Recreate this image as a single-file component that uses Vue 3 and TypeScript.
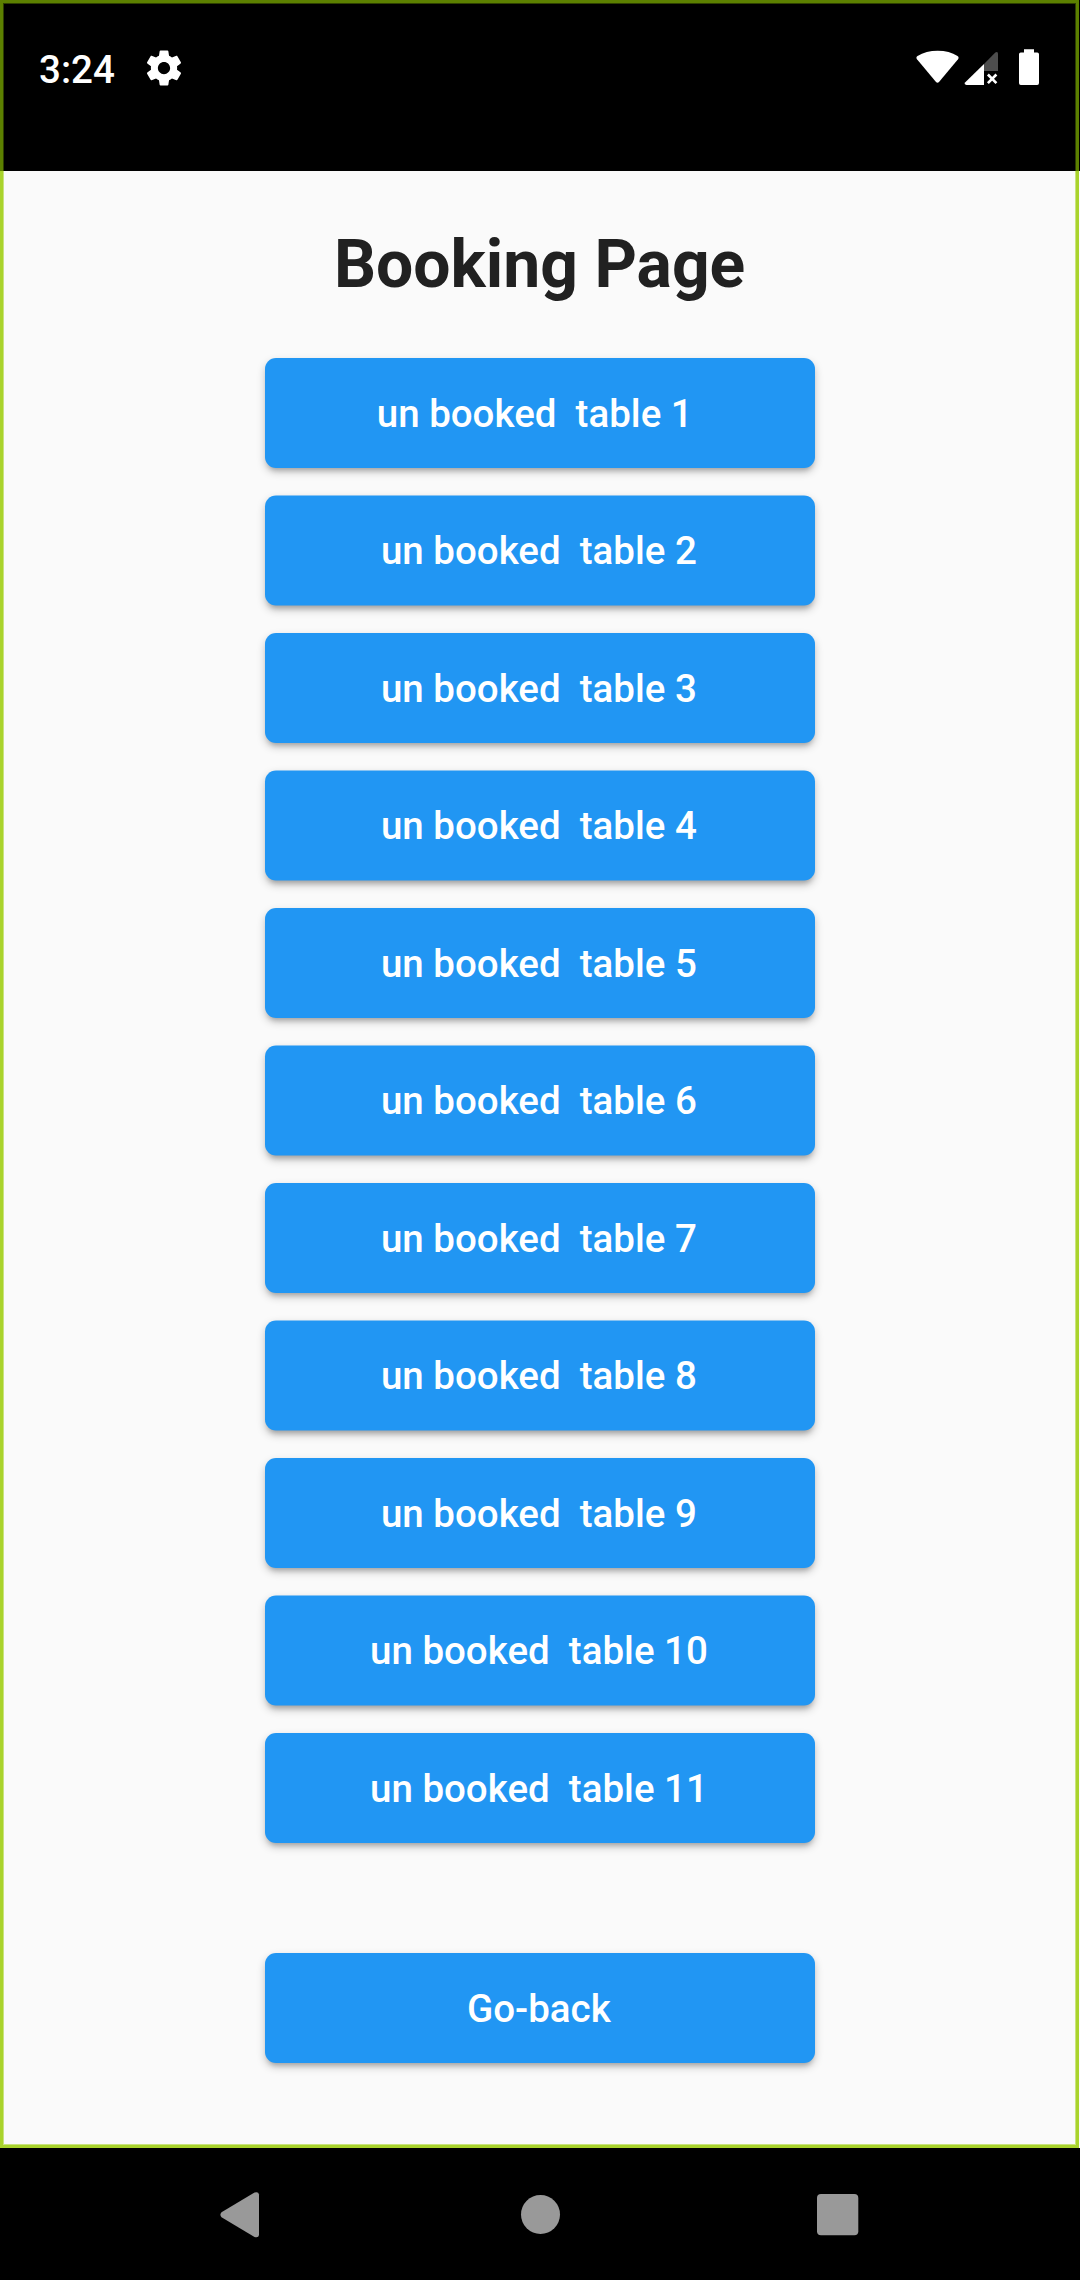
<script setup lang="ts">
const tables: string[] = [
  'un booked  table 1 ',
  ...Array.from({ length: 10 }, (_, i) => `un booked  table ${i + 2}`),
]
</script>

<template>
  <div class="screen">
    <header class="status">
      <div class="left">
        <span class="clock">3:24</span>
        <svg class="gear" viewBox="0 0 24 24">
          <path fill="#fff" d="M19.43 12.98c.04-.32.07-.64.07-.98s-.03-.66-.07-.98l2.11-1.65c.19-.15.24-.42.12-.64l-2-3.46c-.12-.22-.39-.3-.61-.22l-2.49 1c-.52-.4-1.08-.73-1.69-.98l-.38-2.65C14.46 2.18 14.25 2 14 2h-4c-.25 0-.46.18-.49.42l-.38 2.65c-.61.25-1.17.59-1.69.98l-2.49-1c-.23-.09-.49 0-.61.22l-2 3.46c-.13.22-.07.49.12.64l2.11 1.65c-.04.32-.07.65-.07.98s.03.66.07.98l-2.11 1.65c-.19.15-.24.42-.12.64l2 3.46c.12.22.39.3.61.22l2.49-1c.52.4 1.08.73 1.69.98l.38 2.65c.03.24.24.42.49.42h4c.25 0 .46-.18.49-.42l.38-2.65c.61-.25 1.17-.59 1.69-.98l2.49 1c.23.09.49 0 .61-.22l2-3.46c.12-.22.07-.49-.12-.64l-2.11-1.65zM12 15.500c-1.930 0-3.500-1.570-3.500-3.500s1.570-3.500 3.500-3.500 3.500 1.570 3.500 3.500-1.570 3.500-3.500 3.500z" />
        </svg>
      </div>
      <svg class="signals" viewBox="0 0 124 38" width="124" height="38">
        <path fill="#fff" d="M1 10.200Q-.4 8.400 1.500 7Q10 1.700 21.700 1.700T41.500 7Q43.400 8.400 42 10.200L23 33Q21.500 34.600 20 33Z" />
        <path fill="#fff" d="M68 15V36H50.500Q47.500 35.500 49.300 33.300Z" />
        <path fill="#4d4d4d" d="M68 15L79.300 3.500Q81.500 2.300 82 4.500V22H68Z" />
        <path stroke="#fff" stroke-width="2.600" d="M71.900 25.500L80.400 34.200M80.400 25.500L71.900 34.200" />
        <path fill="#fff" d="M108 .3h10v3.200h3.200q1.800 0 1.800 1.800v28.700q0 2-1.800 2h-16.400q-1.800 0-1.800-2v-28.700q0-1.800 1.800-1.800h3.200z" />
      </svg>
    </header>

    <main class="page">
      <h1 class="title">Booking Page</h1>
      <div class="tables">
        <button v-for="label in tables" :key="label" class="btn">{{ label }}</button>
      </div>
      <button class="btn back">Go-back</button>
    </main>

    <nav class="nav">
      <svg viewBox="0 0 1080 132" width="1080" height="132">
        <g fill="#999">
          <path d="M221.500 64.300L254.500 44.600Q258.500 43.300 259 46.500V87Q258.500 90.200 254.500 88.900L221.500 69.200Q219.300 66.700 221.500 64.300Z" />
          <circle cx="540.500" cy="66.500" r="19.500" />
          <rect x="817" y="46" width="41.300" height="41.300" rx="4" />
        </g>
      </svg>
    </nav>

    <div class="frame dark"></div>
    <div class="frame light"></div>
  </div>
</template>

<style>
body {
  margin: 0;
}
</style>

<style scoped>
.screen {
  position: relative;
  display: flex;
  flex-direction: column;
  width: 1080px;
  height: 2280px;
  overflow: hidden;
  background: #fafafa;
  font-family: Roboto, 'Liberation Sans', sans-serif;
}
.status {
  box-sizing: border-box;
  display: flex;
  justify-content: space-between;
  align-items: flex-start;
  height: 171px;
  padding: 49px 40px 0 39px;
  background: #000;
}
.left {
  display: flex;
  align-items: flex-start;
}
.clock {
  margin-top: -2px;
  color: #fff;
  font-size: 38.5px;
  font-weight: 500;
  line-height: 45px;
}
.gear {
  width: 42px;
  height: 42px;
  margin: -2.5px 0 0 28.5px;
}
.page {
  display: flex;
  flex: 1;
  flex-direction: column;
  align-items: center;
}
.title {
  margin: 55px 0 0;
  padding-right: 0.8px;
  color: #212121;
  font-size: 66px;
  font-weight: 700;
  line-height: 77px;
}
.tables {
  display: flex;
  flex-direction: column;
  gap: 27.5px;
  margin-top: 55px;
}
.btn {
  position: relative;
  isolation: isolate;
  box-sizing: border-box;
  width: 550px;
  height: 110px;
  padding: 0 2.2px 0 0;
  border: 0;
  background: none;
  color: #fff;
  font-family: inherit;
  font-size: 38.5px;
  font-weight: 500;
  line-height: 45px;
  text-align: center;
  white-space: pre;
}
.tables .btn:first-child {
  padding-right: 1px;
}
.btn::before {
  position: absolute;
  z-index: -1;
  inset: 0;
  border-radius: 11px;
  background: #2196f3;
  box-shadow:
    0 5px 5px -3px rgba(0, 0, 0, 0.2),
    0 4px 8px rgba(0, 0, 0, 0.22);
  content: '';
}
/* Every second button starts on a half pixel. */
.tables .btn:nth-child(even)::before {
  transform: translateY(-0.5px);
}
.back {
  margin-top: 110px;
}
.nav {
  height: 132px;
  background: #000;
}
.nav svg {
  display: block;
}
.frame {
  position: absolute;
  top: 0;
  left: 0;
  width: 1079px;
  height: 2148px;
  box-sizing: border-box;
  border: 3px solid;
  pointer-events: none;
}
.dark {
  border-color: #5c8000;
  box-shadow: inset 0 0 0 1px rgba(92, 128, 0, 0.5);
  clip-path: inset(0 0 1977px 0);
}
.light {
  border-color: #a9d32c;
  box-shadow: inset 0 0 0 1px rgba(169, 211, 44, 0.6);
  clip-path: inset(171px 0 0 0);
}
</style>
